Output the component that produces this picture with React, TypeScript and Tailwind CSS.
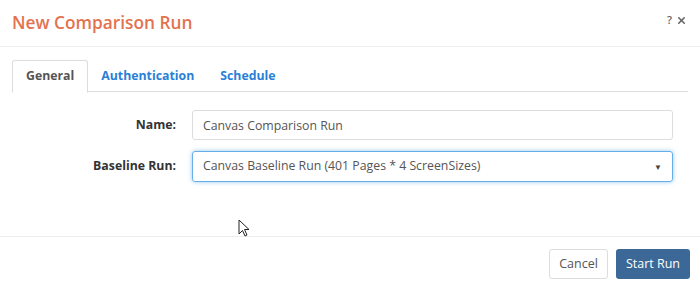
import { X } from 'lucide-react';

const font = { fontFamily: '"Open Sans", "Noto Sans", sans-serif' };

const App = () => {
  return (
    <div className="relative w-[700px] h-[287px] bg-white text-[12.3px] text-[#333] font-['Open_Sans',sans-serif]">
      {/* Header */}
      <div className="h-[47px] flex items-center justify-between pl-[12px] pr-[13px] border-b border-[#eeeeee]">
        <h1 className="text-[17.3px] font-semibold text-[#e3724f] leading-none">New Comparison Run</h1>
        <div className="flex items-center gap-[4px] text-[#666] -mt-[6px]">
          <span className="text-[11px] font-semibold">?</span>
          <X size={11} strokeWidth={3.5} />
        </div>
      </div>

      {/* Tabs */}
      <div className="mx-[12px] mt-[13px] flex border-b border-[#dddddd] h-[32px]">
        <div className="px-[13px] h-[33px] flex items-center font-bold text-[#555] bg-white border border-[#dddddd] border-b-white rounded-t-[3px]">
          General
        </div>
        <div className="px-[13px] h-[32px] flex items-center font-bold text-[#2a7fd6]">Authentication</div>
        <div className="px-[13px] h-[32px] flex items-center font-bold text-[#2a7fd6]">Schedule</div>
      </div>

      {/* Form */}
      <div className="mt-[18px] flex flex-col gap-[11px]">
        <div className="flex items-center">
          <label className="w-[176px] text-right font-bold">Name:</label>
          <input
            className="ml-[16px] w-[481px] h-[30px] px-[10px] border border-[#dddddd] rounded-[3px] text-[#555] outline-none"
            style={{ ...font, fontSize: '12.3px' }}
            defaultValue="Canvas Comparison Run"
          />
        </div>
        <div className="flex items-center">
          <label className="w-[176px] text-right font-bold">Baseline Run:</label>
          <div className="ml-[16px] w-[481px] h-[31px] px-[10px] flex items-center justify-between border border-[#66afe9] rounded-[3px] text-[#555] shadow-[0_0_4px_rgba(102,175,233,0.7)]">
            <span>Canvas Baseline Run (401 Pages * 4 ScreenSizes)</span>
            <span className="text-[8px] text-[#444]">▼</span>
          </div>
        </div>
      </div>

      {/* Footer */}
      <div className="absolute left-0 right-0 top-[236px] border-t border-[#eeeeee] flex justify-end gap-[8px] pt-[12px] pr-[10px]">
        <button className="h-[30px] px-[9px] border border-[#dddddd] rounded-[3px] text-[#555] bg-white text-[12.5px]">Cancel</button>
        <button className="h-[30px] px-[10px] rounded-[3px] text-white bg-[#3b6897] text-[12.5px]">Start Run</button>
      </div>

      {/* Mouse cursor */}
      <svg className="absolute left-[238px] top-[219px]" width="12" height="19" viewBox="0 0 12 19">
        <path d="M1 1 L1 15 L4.5 11.5 L7 17 L9 16 L6.5 10.5 L11 10.5 Z" fill="white" stroke="#222" strokeWidth="1" strokeLinejoin="round" />
      </svg>
    </div>
  );
};

export default App;
